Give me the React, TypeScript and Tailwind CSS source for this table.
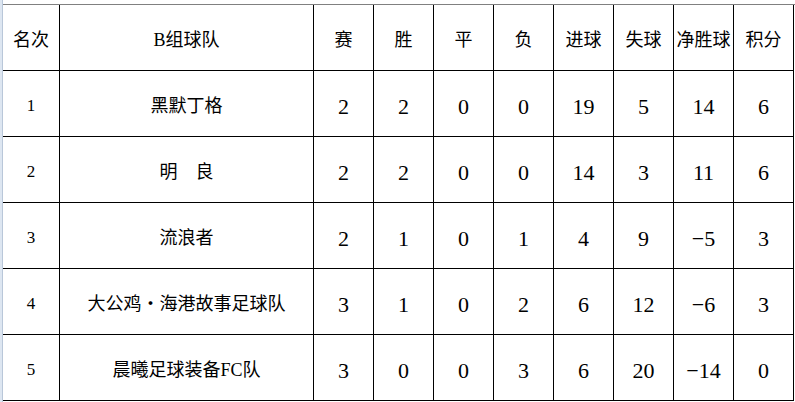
const headers = ['名次', 'B组球队', '赛', '胜', '平', '负', '进球', '失球', '净胜球', '积分']

const rows: [number, string, ...string[]][] = [
  [1, '黑默丁格', '2', '2', '0', '0', '19', '5', '14', '6'],
  [2, '明　良', '2', '2', '0', '0', '14', '3', '11', '6'],
  [3, '流浪者', '2', '1', '0', '1', '4', '9', '−5', '3'],
  [4, '大公鸡・海港故事足球队', '3', '1', '0', '2', '6', '12', '−6', '3'],
  [5, '晨曦足球装备FC队', '3', '0', '0', '3', '6', '20', '−14', '0'],
]

const cjk = "font-['Liberation_Serif','Noto_Sans_CJK_SC',serif]"
const num = "font-['Liberation_Serif',serif]"

export default function App() {
  return (
    <div className="w-[795px] h-[402px] bg-white flex overflow-hidden text-black">
      <div className="w-[3px] h-full flex">
        <div className="w-[2px] bg-[#dde6f1]" />
        <div className="w-px bg-[#b9c7d9]" />
      </div>
      <div className="flex flex-col">
        <div className="h-[4px]" />
        <div className="h-px w-[792px] bg-[#808080]" />
        <div className="w-[791px] grid grid-cols-[56px_253px_repeat(8,59px)] auto-rows-[65px] gap-px bg-black border-r border-b border-black">
          {headers.map((h) => (
            <div key={h} className={`bg-white flex items-center justify-center pt-[6px] text-[18px] ${cjk}`}>
              {h}
            </div>
          ))}
          {rows.map(([rank, team, ...stats]) => (
            <div key={rank} className="contents">
              <div className={`bg-white flex items-center justify-center pt-[5px] text-[17px] ${num}`}>{rank}</div>
              <div className={`bg-white flex items-center justify-center pt-[6px] text-[18px] ${cjk}`}>{team}</div>
              {stats.map((s, i) => (
                <div key={i} className={`bg-white flex items-center justify-center pt-[5px] text-[22px] ${num}`}>
                  {s}
                </div>
              ))}
            </div>
          ))}
        </div>
      </div>
    </div>
  )
}
